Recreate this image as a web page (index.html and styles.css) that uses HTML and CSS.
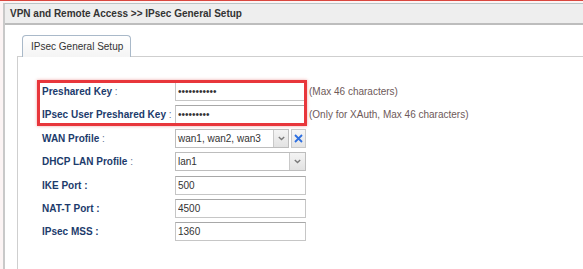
FILE: index.html
```html
<!DOCTYPE html>
<html>
<head>
    <meta charset="UTF-8">
    <title>IPsec General Setup</title>
    <link rel="stylesheet" href="styles.css">
</head>
<body>
    <div class="frame">
        <div class="title">VPN and Remote Access &gt;&gt; IPsec General Setup</div>

        <div class="tabs">
            <div class="tab">IPsec General Setup</div>
        </div>

        <div class="panel">
            <div class="form">
                <!-- red annotation box over the two key rows -->
                <div class="highlight"></div>

                <span class="label">Preshared Key <span class="colon">:</span></span>
                <input type="password" class="field" value="abcdefghijk">
                <span class="hint">(Max 46 characters)</span>

                <span class="label">IPsec User Preshared Key <span class="colon">:</span></span>
                <input type="password" class="field" value="abcdefghi">
                <span class="hint">(Only for XAuth, Max 46 characters)</span>

                <span class="label">WAN Profile <span class="colon">:</span></span>
                <div class="combo">
                    <div class="select">
                        <span class="select-text">wan1, wan2, wan3</span>
                        <span class="select-arrow">
                            <svg width="7" height="5" viewBox="0 0 7 5"><path d="M0.8 1 L3.5 3.6 L6.2 1" fill="none" stroke="#7a7a7a" stroke-width="1.4"/></svg>
                        </span>
                    </div>
                    <span class="clear">
                        <svg width="9" height="9" viewBox="0 0 9 9"><path d="M1 1 L8 8 M8 1 L1 8" stroke="#2d6fe0" stroke-width="1.8"/></svg>
                    </span>
                </div>
                <span></span>

                <span class="label">DHCP LAN Profile <span class="colon">:</span></span>
                <div class="select">
                    <span class="select-text">lan1</span>
                    <span class="select-arrow wide">
                        <svg width="7" height="5" viewBox="0 0 7 5"><path d="M0.8 1 L3.5 3.6 L6.2 1" fill="none" stroke="#7a7a7a" stroke-width="1.4"/></svg>
                    </span>
                </div>
                <span></span>

                <span class="label">IKE Port <b class="colon bold">:</b></span>
                <input type="text" class="field" value="500">
                <span></span>

                <span class="label">NAT-T Port <b class="colon bold">:</b></span>
                <input type="text" class="field" value="4500">
                <span></span>

                <span class="label">IPsec MSS <b class="colon bold">:</b></span>
                <input type="text" class="field" value="1360">
                <span></span>
            </div>
        </div>
    </div>
</body>
</html>
```

FILE: styles.css
```css
html, body {
    height: 100%;
}

body {
    margin: 0;
    padding: 2px 0 0 3px;
    box-sizing: border-box;
    overflow: hidden;
    font-family: "Liberation Sans", Arial, sans-serif;
    font-size: 10px;
    background-color: #fcf4f4;
    border-top: 1px solid #d9473f;
}

.frame {
    display: flex;
    flex-direction: column;
    box-sizing: border-box;
    height: 100%;
    background-color: #fff;
    border-left: 2px solid #c9c9c9;
    border-top: 1px solid #b9c4c6;
}

.title {
    height: 19px;
    line-height: 19px;
    padding-left: 5px;
    background-color: #eeeeee;
    border-bottom: 2px solid #bdbdbd;
    color: #333;
    font-weight: bold;
}

.tabs {
    display: flex;
    margin-top: 10px;
    padding-left: 17px;
}

.tab {
    position: relative;
    z-index: 1;
    height: 21px;
    line-height: 21px;
    padding: 0 7px 0 8px;
    margin-bottom: -1px;
    background: linear-gradient(#ffffff, #f4f4f4);
    border: 1px solid #a9b9c9;
    border-bottom: none;
    border-radius: 4px 4px 0 0;
    color: #333;
}

.panel {
    flex: 1;
    margin-left: 12px;
    padding: 25px 0 0 24px;
    border-left: 1px solid #cfcfcf;
    border-top: 1px solid #cfcfcf;
}

.form {
    position: relative;
    display: grid;
    grid-template-columns: 133px 131px auto;
    grid-auto-rows: 19px;
    row-gap: 4.4px;
    align-items: center;
}

.highlight {
    position: absolute;
    left: -5px;
    top: -2px;
    width: 270px;
    height: 46px;
    box-sizing: border-box;
    border: 3px solid #e8363b;
    box-shadow: 0 0 3px rgba(220, 60, 60, 0.45);
    z-index: 2;
    pointer-events: none;
}

.label {
    color: #1c3b6c;
    font-weight: bold;
    white-space: nowrap;
}

.colon {
    font-weight: normal;
    color: #5f7393;
}

.colon.bold {
    font-weight: bold;
    color: #1c3b6c;
}

.field {
    box-sizing: border-box;
    width: 131px;
    height: 19px;
    margin: 0;
    padding: 0 2px;
    border: 1px solid #c6c6c6;
    border-top-color: #a8a8a8;
    font-family: "Liberation Sans", Arial, sans-serif;
    font-size: 10px;
    color: #333;
    background-color: #fff;
    outline: none;
}

.hint {
    margin-left: 3px;
    color: #6e5959;
    white-space: nowrap;
}

.combo {
    display: flex;
    gap: 2px;
    width: 131px;
}

.select {
    display: flex;
    box-sizing: border-box;
    flex: 1;
    height: 19px;
    border: 1px solid #bdbdbd;
    background-color: #fff;
    color: #333;
}

.select-text {
    flex: 1;
    line-height: 17px;
    padding-left: 2px;
}

.select-arrow {
    display: flex;
    align-items: center;
    justify-content: center;
    width: 14px;
    border-left: 1px solid #c9c9c9;
    background: linear-gradient(#f4f4f4, #e2e2e2);
}

.select-arrow.wide {
    width: 15px;
}

.clear {
    display: flex;
    align-items: center;
    justify-content: center;
    box-sizing: border-box;
    width: 15px;
    height: 19px;
    border: 1px solid #c9c9c9;
    background: linear-gradient(#f6f6f6, #e4e4e4);
}
```
